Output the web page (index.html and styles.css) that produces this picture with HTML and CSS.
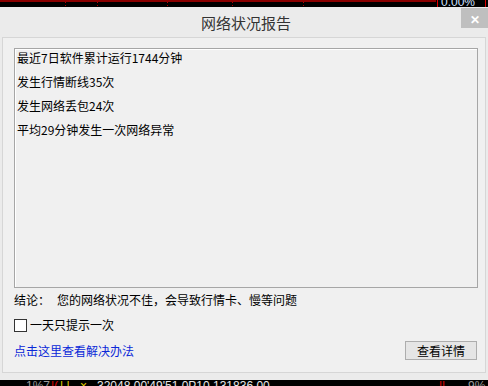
FILE: index.html
```html
<!DOCTYPE html>
<html lang="zh-CN">
<head>
    <meta charset="UTF-8">
    <title>网络状况报告</title>
    <link rel="stylesheet" href="styles.css">
</head>
<body>
    <svg class="strip" width="488" height="7" viewBox="0 0 488 7">
        <rect x="0" y="0" width="488" height="7" fill="#000"/>
        <rect x="0" y="0" width="436" height="2" fill="#8a0000"/>
        <g stroke="#b00000" stroke-width="1" stroke-dasharray="1 2">
            <line x1="65.5" y1="2" x2="65.5" y2="7"/>
            <line x1="97.5" y1="2" x2="97.5" y2="7"/>
            <line x1="167.5" y1="2" x2="167.5" y2="7"/>
            <line x1="232.5" y1="2" x2="232.5" y2="7"/>
            <line x1="303.5" y1="2" x2="303.5" y2="7"/>
        </g>
        <line x1="437.5" y1="0" x2="437.5" y2="7" stroke="#e00000"/>
        <line x1="485.5" y1="0" x2="485.5" y2="7" stroke="#e00000"/>
        <text x="441" y="6" font-family="Liberation Sans, sans-serif" font-size="12" fill="#cfe0ff">0.00%</text>
    </svg>

    <div class="dialog">
        <div class="titlebar">
            <span class="title">网络状况报告</span>
            <span class="close">&#x2715;</span>
        </div>

        <div class="panel">
            <div class="report">
                <p>最近7日软件累计运行1744分钟</p>
                <p>发生行情断线35次</p>
                <p>发生网络丢包24次</p>
                <p>平均29分钟发生一次网络异常</p>
            </div>

            <p class="verdict"><span class="label">结论：</span>您的网络状况不佳，会导致行情卡、慢等问题</p>

            <label class="once">
                <input type="checkbox" class="check">
                一天只提示一次
            </label>

            <div class="actions">
                <a class="help" href="#">点击这里查看解决办法</a>
                <button class="details">查看详情</button>
            </div>
        </div>
    </div>

    <svg class="strip" width="488" height="6" viewBox="0 0 488 6">
        <rect x="0" y="0" width="488" height="6" fill="#000"/>
        <g font-family="Liberation Sans, sans-serif" font-size="12">
            <text x="26" y="10" fill="#9a9a9a">1%7</text>
            <text x="51" y="10" fill="#e00000">|(</text>
            <text x="60" y="10" fill="#e0d000">| |</text>
            <text x="80" y="10" fill="#e0d000">×</text>
            <text x="97" y="10" fill="#e8e8e8">32048 00'49'51  0P10  131836 00</text>
            <text x="439" y="10" fill="#e00000">||</text>
            <text x="468" y="10" fill="#9a9a9a">9%</text>
        </g>
    </svg>
</body>
</html>
```

FILE: styles.css
```css
body {
    width: 488px;
    height: 386px;
    margin: 0;
    background: #000;
    font-family: "Noto Sans CJK SC", "Liberation Sans", sans-serif;
    font-size: 12px;
    color: #000;
    overflow: hidden;
}
.strip {
    display: block;
}
.dialog {
    height: 373px;
    background: #ebebeb;
}
.titlebar {
    position: relative;
    height: 30px;
    display: flex;
    align-items: center;
    justify-content: center;
}
.title {
    font-size: 15px;
    color: #333;
    padding-left: 4px;
}
.close {
    position: absolute;
    top: 1px;
    right: 0;
    width: 27px;
    height: 20px;
    background: #bfbfbf;
    color: #fff;
    font-size: 12px;
    font-weight: bold;
    display: flex;
    align-items: center;
    justify-content: center;
}
.panel {
    margin: 0 2px;
    height: 334px;
    border: 1px solid #d6d6d6;
    background: #f0f0f0;
    padding: 10px 7px 0 11px;
    box-sizing: border-box;
    height: 336px;
}
.report {
    height: 240px;
    border: 1px solid #a6a6a6;
    box-shadow: inset 1px 1px 0 #fff;
    box-sizing: border-box;
    padding: 1px 0 0 2px;
}
.report p {
    margin: 0 0 8px 0;
    line-height: 16px;
}
.verdict {
    margin: 4px 0 0 0;
    line-height: 16px;
}
.verdict .label {
    margin-right: 7px;
}
.once {
    display: flex;
    align-items: center;
    gap: 3px;
    margin-top: 9px;
    line-height: 16px;
}
.check {
    appearance: none;
    width: 13px;
    height: 13px;
    margin: 0;
    border: 1px solid #333;
    background: #fff;
    box-sizing: border-box;
}
.actions {
    display: flex;
    align-items: center;
    justify-content: space-between;
    margin-top: 8px;
    padding-right: 1px;
}
.help {
    color: #0a28d8;
    text-decoration: none;
    line-height: 16px;
}
.details {
    width: 72px;
    height: 19px;
    padding: 0;
    border: 1px solid #adadad;
    background: #e5e5e5;
    font-family: inherit;
    font-size: 12px;
    color: #000;
}
```
